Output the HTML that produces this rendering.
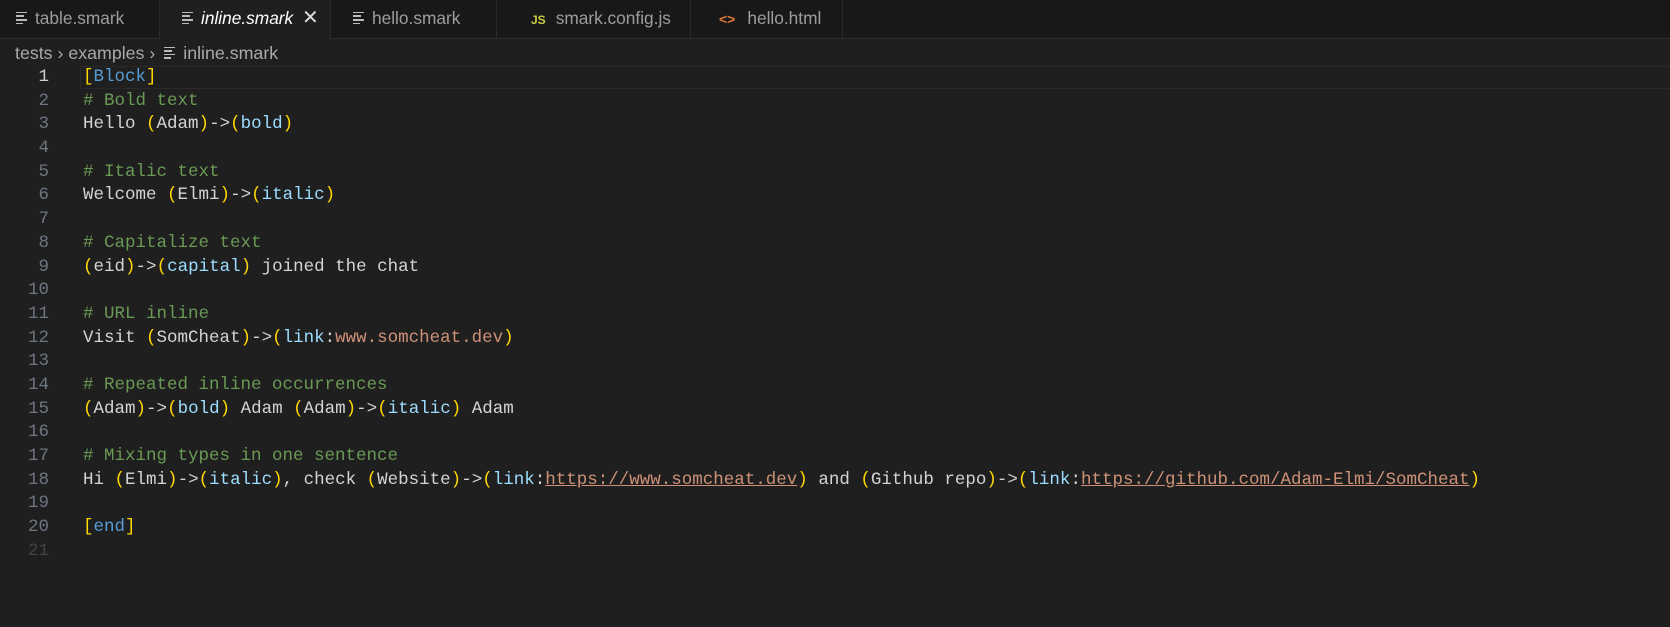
<!DOCTYPE html>
<html><head><meta charset="utf-8"><style>
body{margin:0;width:1670px;height:627px;background:#1f1f1f;overflow:hidden;font-family:"Liberation Sans",sans-serif;position:relative}
.tabs{position:absolute;left:0;top:0;width:1670px;height:39px;background:#181818;border-bottom:1px solid #2b2b2b;box-sizing:border-box}
.tab{position:absolute;top:0;height:39px;border-right:1px solid #2b2b2b;box-sizing:border-box;color:#9d9d9d;font-size:17.3px;line-height:37px;padding-left:16px;white-space:nowrap}
.tab.act{background:#1f1f1f;color:#fff;font-style:italic;height:40px}
.ic{display:inline-block;width:11px;vertical-align:middle;margin-right:8px;margin-top:-3px}
.ic i{display:block;height:1.6px;background:#bbb;margin:2px 0}
.bc{position:absolute;top:41px;left:15px;color:#a9a9a9;font-size:17.8px;line-height:24px}
.ed{position:absolute;top:66px;left:0;width:1670px;font-family:"Liberation Mono",monospace;font-size:17.5px}
.l{height:23.7px;line-height:23.7px;position:relative;white-space:pre;color:#d4d4d4}
.n{position:absolute;left:0;width:49px;text-align:right;color:#6e7681}
.c{position:absolute;left:83px}
.cur{position:absolute;left:80px;right:0;top:0;height:23px;border:1px solid #2a2a2a;border-right:none;box-sizing:border-box}
.y{color:#ffd700}.b{color:#569cd6}.lb{color:#9cdcfe}.g{color:#6a9955}.o{color:#ce9178}.u{color:#ce9178;text-decoration:underline}
</style></head><body>
<div class="tabs">
<div class="tab" style="left:0;width:160px"><span class="ic"><i></i><i style="width:8px"></i><i></i><i style="width:7px"></i></span>table.smark</div>
<div class="tab act" style="left:160px;width:171px;padding-left:22px"><span class="ic"><i></i><i style="width:8px"></i><i></i><i style="width:7px"></i></span>inline.smark <span style="font-style:normal;font-size:20px;margin-left:4px;color:#ddd">✕</span></div>
<div class="tab" style="left:331px;width:166px;padding-left:22px"><span class="ic"><i></i><i style="width:8px"></i><i></i><i style="width:7px"></i></span>hello.smark</div>
<div class="tab" style="left:497px;width:194px;padding-left:34px"><span style="color:#cbcb41;font-weight:bold;font-size:12px;margin-right:10px">JS</span>smark.config.js</div>
<div class="tab" style="left:691px;width:152px;padding-left:28px"><span style="color:#e37933;font-size:14px;margin-right:12px;font-weight:bold">&lt;&gt;</span>hello.html</div>
</div>
<div class="bc">tests › examples › <span class="ic" style="margin-left:4px"><i></i><i style="width:8px"></i><i></i><i style="width:7px"></i></span>inline.smark</div>
<div class="ed">
<div class="l"><div class="cur"></div><span class="n" style="color:#ccc">1</span><span class="c"><span class="y">[</span><span class="b">Block</span><span class="y">]</span></span></div>
<div class="l"><span class="n">2</span><span class="c g"># Bold text</span></div>
<div class="l"><span class="n">3</span><span class="c">Hello <span class="y">(</span>Adam<span class="y">)</span>-&gt;<span class="y">(</span><span class="lb">bold</span><span class="y">)</span></span></div>
<div class="l"><span class="n">4</span></div>
<div class="l"><span class="n">5</span><span class="c g"># Italic text</span></div>
<div class="l"><span class="n">6</span><span class="c">Welcome <span class="y">(</span>Elmi<span class="y">)</span>-&gt;<span class="y">(</span><span class="lb">italic</span><span class="y">)</span></span></div>
<div class="l"><span class="n">7</span></div>
<div class="l"><span class="n">8</span><span class="c g"># Capitalize text</span></div>
<div class="l"><span class="n">9</span><span class="c"><span class="y">(</span>eid<span class="y">)</span>-&gt;<span class="y">(</span><span class="lb">capital</span><span class="y">)</span> joined the chat</span></div>
<div class="l"><span class="n">10</span></div>
<div class="l"><span class="n">11</span><span class="c g"># URL inline</span></div>
<div class="l"><span class="n">12</span><span class="c">Visit <span class="y">(</span>SomCheat<span class="y">)</span>-&gt;<span class="y">(</span><span class="lb">link</span>:<span class="o">www.somcheat.dev</span><span class="y">)</span></span></div>
<div class="l"><span class="n">13</span></div>
<div class="l"><span class="n">14</span><span class="c g"># Repeated inline occurrences</span></div>
<div class="l"><span class="n">15</span><span class="c"><span class="y">(</span>Adam<span class="y">)</span>-&gt;<span class="y">(</span><span class="lb">bold</span><span class="y">)</span> Adam <span class="y">(</span>Adam<span class="y">)</span>-&gt;<span class="y">(</span><span class="lb">italic</span><span class="y">)</span> Adam</span></div>
<div class="l"><span class="n">16</span></div>
<div class="l"><span class="n">17</span><span class="c g"># Mixing types in one sentence</span></div>
<div class="l"><span class="n">18</span><span class="c">Hi <span class="y">(</span>Elmi<span class="y">)</span>-&gt;<span class="y">(</span><span class="lb">italic</span><span class="y">)</span>, check <span class="y">(</span>Website<span class="y">)</span>-&gt;<span class="y">(</span><span class="lb">link</span>:<span class="u">https://www.somcheat.dev</span><span class="y">)</span> and <span class="y">(</span>Github repo<span class="y">)</span>-&gt;<span class="y">(</span><span class="lb">link</span>:<span class="u">https://github.com/Adam-Elmi/SomCheat</span><span class="y">)</span></span></div>
<div class="l"><span class="n">19</span></div>
<div class="l"><span class="n">20</span><span class="c"><span class="y">[</span><span class="b">end</span><span class="y">]</span></span></div>
<div class="l"><span class="n" style="color:#444">21</span></div>
</div>
</body></html>
